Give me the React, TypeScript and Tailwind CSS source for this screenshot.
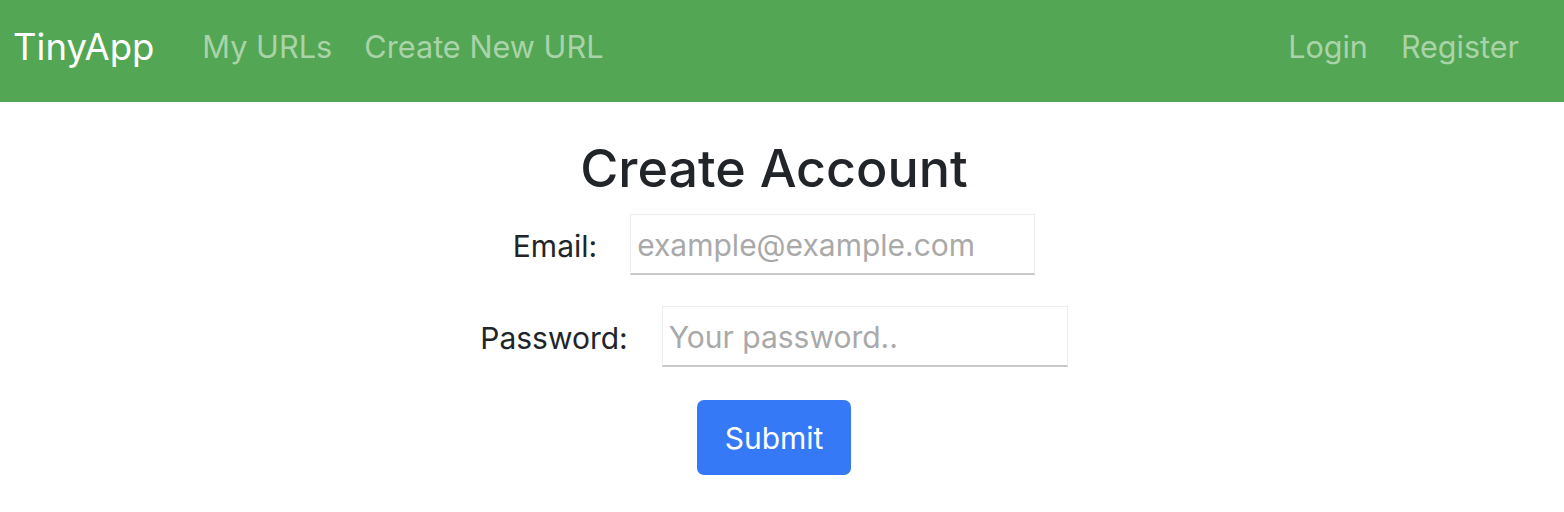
import React from "react";

export default function App() {
  const font = { fontFamily: "Inter, 'Noto Sans', sans-serif" };
  return (
    <div className="min-h-[512px] bg-white" style={font}>
      <nav className="flex h-[102px] items-center justify-between bg-[#53a653] pb-[8px] pl-[13px] pr-[45px]">
        <div className="flex items-center">
          <span className="text-[36.5px] leading-none text-white">TinyApp</span>
          <div className="ml-[48px] flex items-center gap-[32px] text-[30.7px] leading-none text-[#a9d3a9]">
            <span>My URLs</span>
            <span>Create New URL</span>
          </div>
        </div>
        <div className="flex items-center gap-[33px] text-[30.5px] leading-none text-[#a9d3a9]">
          <span>Login</span>
          <span>Register</span>
        </div>
      </nav>
      <main className="flex w-[1548px] flex-col items-center text-[#212529]">
        <h1 className="mt-[36px] text-[52px] font-medium leading-[62px]">Create Account</h1>
        <div className="mt-[14px] flex items-center">
          <label className="mr-[33px] pt-[3px] text-[30px]">Email:</label>
          <div className="flex h-[61px] w-[405px] items-center border border-[#ececec] border-b-2 border-b-[#c9c9c9] px-[6px] pt-[3px] text-[30px] text-[#a9a9a9]">
            example@example.com
          </div>
        </div>
        <div className="mt-[31px] flex items-center">
          <label className="mr-[34px] pt-[3px] text-[30px]">Password:</label>
          <div className="flex h-[61px] w-[406px] items-center border border-[#ececec] border-b-2 border-b-[#c9c9c9] px-[6px] pt-[3px] text-[30px] text-[#a9a9a9]">
            Your password..
          </div>
        </div>
        <button className="mt-[33px] flex h-[75px] w-[154px] items-center justify-center rounded-[7px] bg-[#3579f6] pt-[2px] text-[30px] text-white">
          Submit
        </button>
      </main>
    </div>
  );
}
